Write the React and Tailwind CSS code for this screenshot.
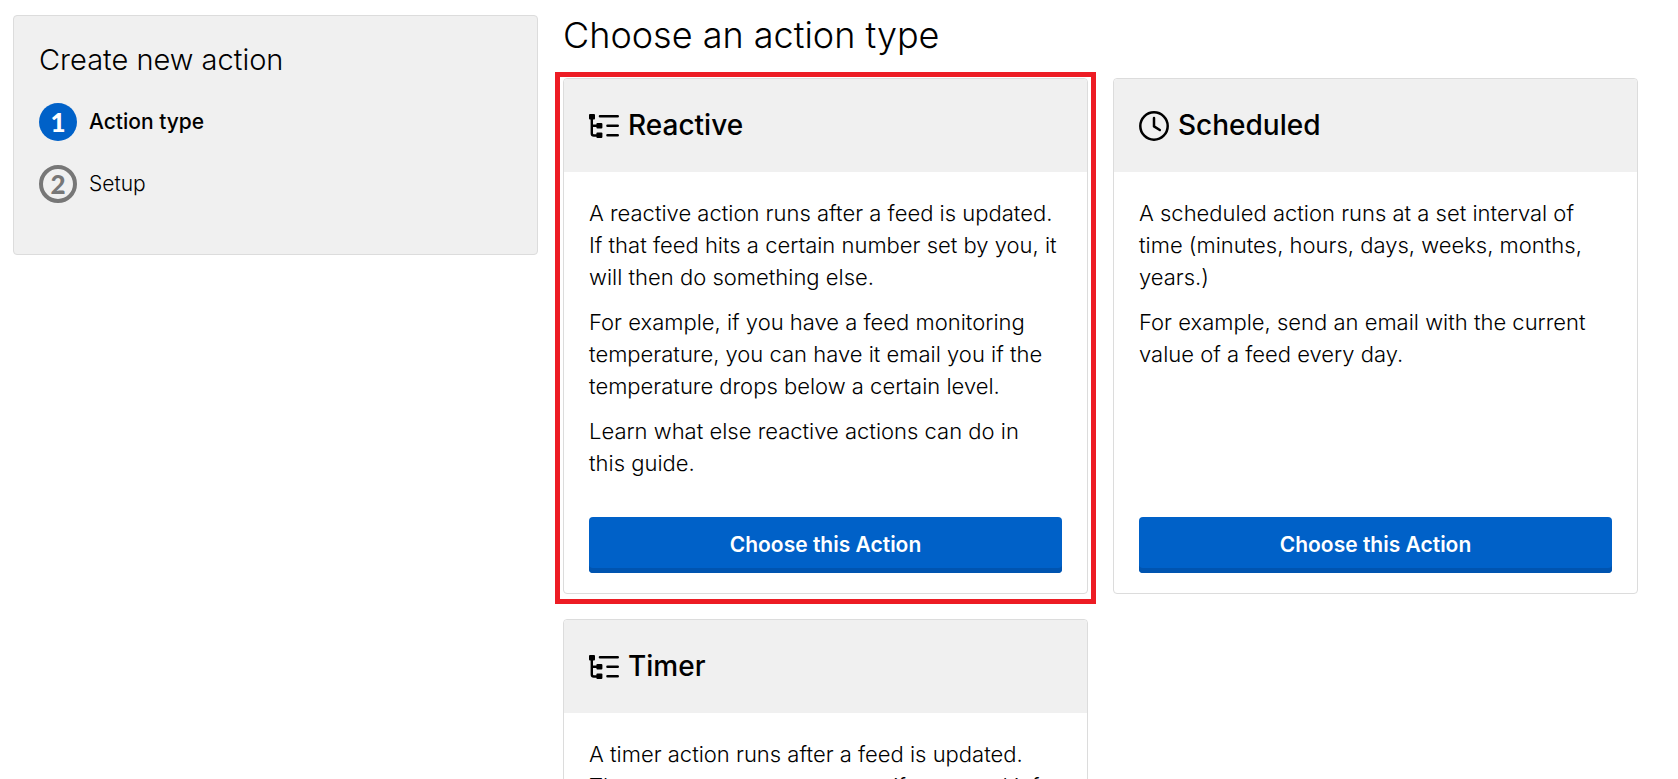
function TreeIcon() {
  return (
    <svg className="h-6 w-[30px] shrink-0" viewBox="0 0 30 24" fill="none" stroke="currentColor" aria-hidden="true">
      <path d="M2.8 3V19.5Q2.8 21.5 4.8 21.5H9M2.8 11.7H9" strokeWidth="2.4" />
      <path d="M11 2.3H28.7M18.5 11.7H28.7M18.5 21.3H28.7" strokeWidth="2.6" strokeLinecap="round" />
      <g fill="currentColor" stroke="none">
        <rect x="0" y="0" width="6" height="5.4" rx="1" />
        <rect x="7.4" y="9" width="6" height="5.4" rx="1" />
        <rect x="7.4" y="18.6" width="6" height="5.4" rx="1" />
      </g>
    </svg>
  );
}

function ClockIcon() {
  return (
    <svg className="size-[30px] shrink-0" viewBox="0 0 30 30" fill="none" stroke="currentColor" aria-hidden="true">
      <circle cx="15" cy="15" r="13.7" strokeWidth="2.5" />
      <path d="M15 7V15.4L20.8 19" strokeWidth="2.5" strokeLinecap="round" strokeLinejoin="round" />
    </svg>
  );
}

const actions = [
  {
    title: 'Reactive',
    Icon: TreeIcon,
    highlighted: true,
    text: [
      'A reactive action runs after a feed is updated. If that feed hits a certain number set by you, it will then do something else.',
      'For example, if you have a feed monitoring temperature, you can have it email you if the temperature drops below a certain level.',
      'Learn what else reactive actions can do in this\u00a0guide.',
    ],
  },
  {
    title: 'Scheduled',
    Icon: ClockIcon,
    text: [
      'A scheduled action runs at a set interval of time (minutes, hours, days, weeks, months, years.)',
      'For example, send an email with the current value of a feed every day.',
    ],
  },
  {
    title: 'Timer',
    Icon: TreeIcon,
    text: ['A timer action runs after a feed is updated. The message can recur even if you need it for days.'],
  },
];

function ActionCard({ title, Icon, text, highlighted }) {
  return (
    <article className="relative flex flex-col rounded border border-[#dcdcdc] bg-white">
      <header className="flex items-center gap-[9px] rounded-t bg-[#f0f0f0] px-[25px] py-6">
        <Icon />
        <h2 className="text-[28px] leading-[45px] font-medium">{title}</h2>
      </header>
      <div className="flex grow flex-col px-[25px] pt-[25px] pb-5">
        <div className="mb-[38px] flex flex-col gap-[13px] text-[22px] leading-8 font-[340]">
          {text.map((t) => (
            <p key={t}>{t}</p>
          ))}
        </div>
        <button
          type="button"
          className="mt-auto h-14 rounded bg-[#0061c8] text-[21px] font-semibold text-white shadow-[inset_0_-5px_0_#0054b0]"
        >
          Choose this Action
        </button>
      </div>
      {highlighted && (
        <div className="pointer-events-none absolute -top-[7px] -right-[9px] -bottom-[11px] -left-[9px] border-5 border-[#ed1c24]" />
      )}
    </article>
  );
}

export default function App() {
  return (
    <div className="grid min-h-screen grid-cols-3 items-start gap-[25px] bg-white pt-[15px] pr-10 pl-[13px] font-['Inter','Liberation_Sans',sans-serif] text-black">
      <aside className="rounded border border-[#dcdcdc] bg-[#f0f0f0] px-[25px] pt-[25px] pb-[51px]">
        <h2 className="mb-6 text-[29px] leading-[38px] font-[340]">Create new action</h2>
        <ol className="flex flex-col gap-6">
          <li className="flex items-center gap-3">
            <span className="flex size-[38px] items-center justify-center rounded-full bg-[#0061c8] font-['Lato',sans-serif] text-[26px] leading-none font-black text-white">
              1
            </span>
            <span className="text-[21px] font-medium">Action type</span>
          </li>
          <li className="flex items-center gap-3">
            <span className="flex size-[38px] items-center justify-center rounded-full border-4 border-[#777] font-['Lato',sans-serif] text-[26px] leading-none font-black text-[#777]">
              2
            </span>
            <span className="text-[21px] font-[340]">Setup</span>
          </li>
        </ol>
      </aside>
      <main className="col-span-2">
        <h1 className="mb-[23px] text-[36px] leading-10 font-[340]">Choose an action type</h1>
        <div className="grid grid-cols-2 gap-[25px]">
          {actions.map((a) => (
            <ActionCard key={a.title} {...a} />
          ))}
        </div>
      </main>
    </div>
  );
}
